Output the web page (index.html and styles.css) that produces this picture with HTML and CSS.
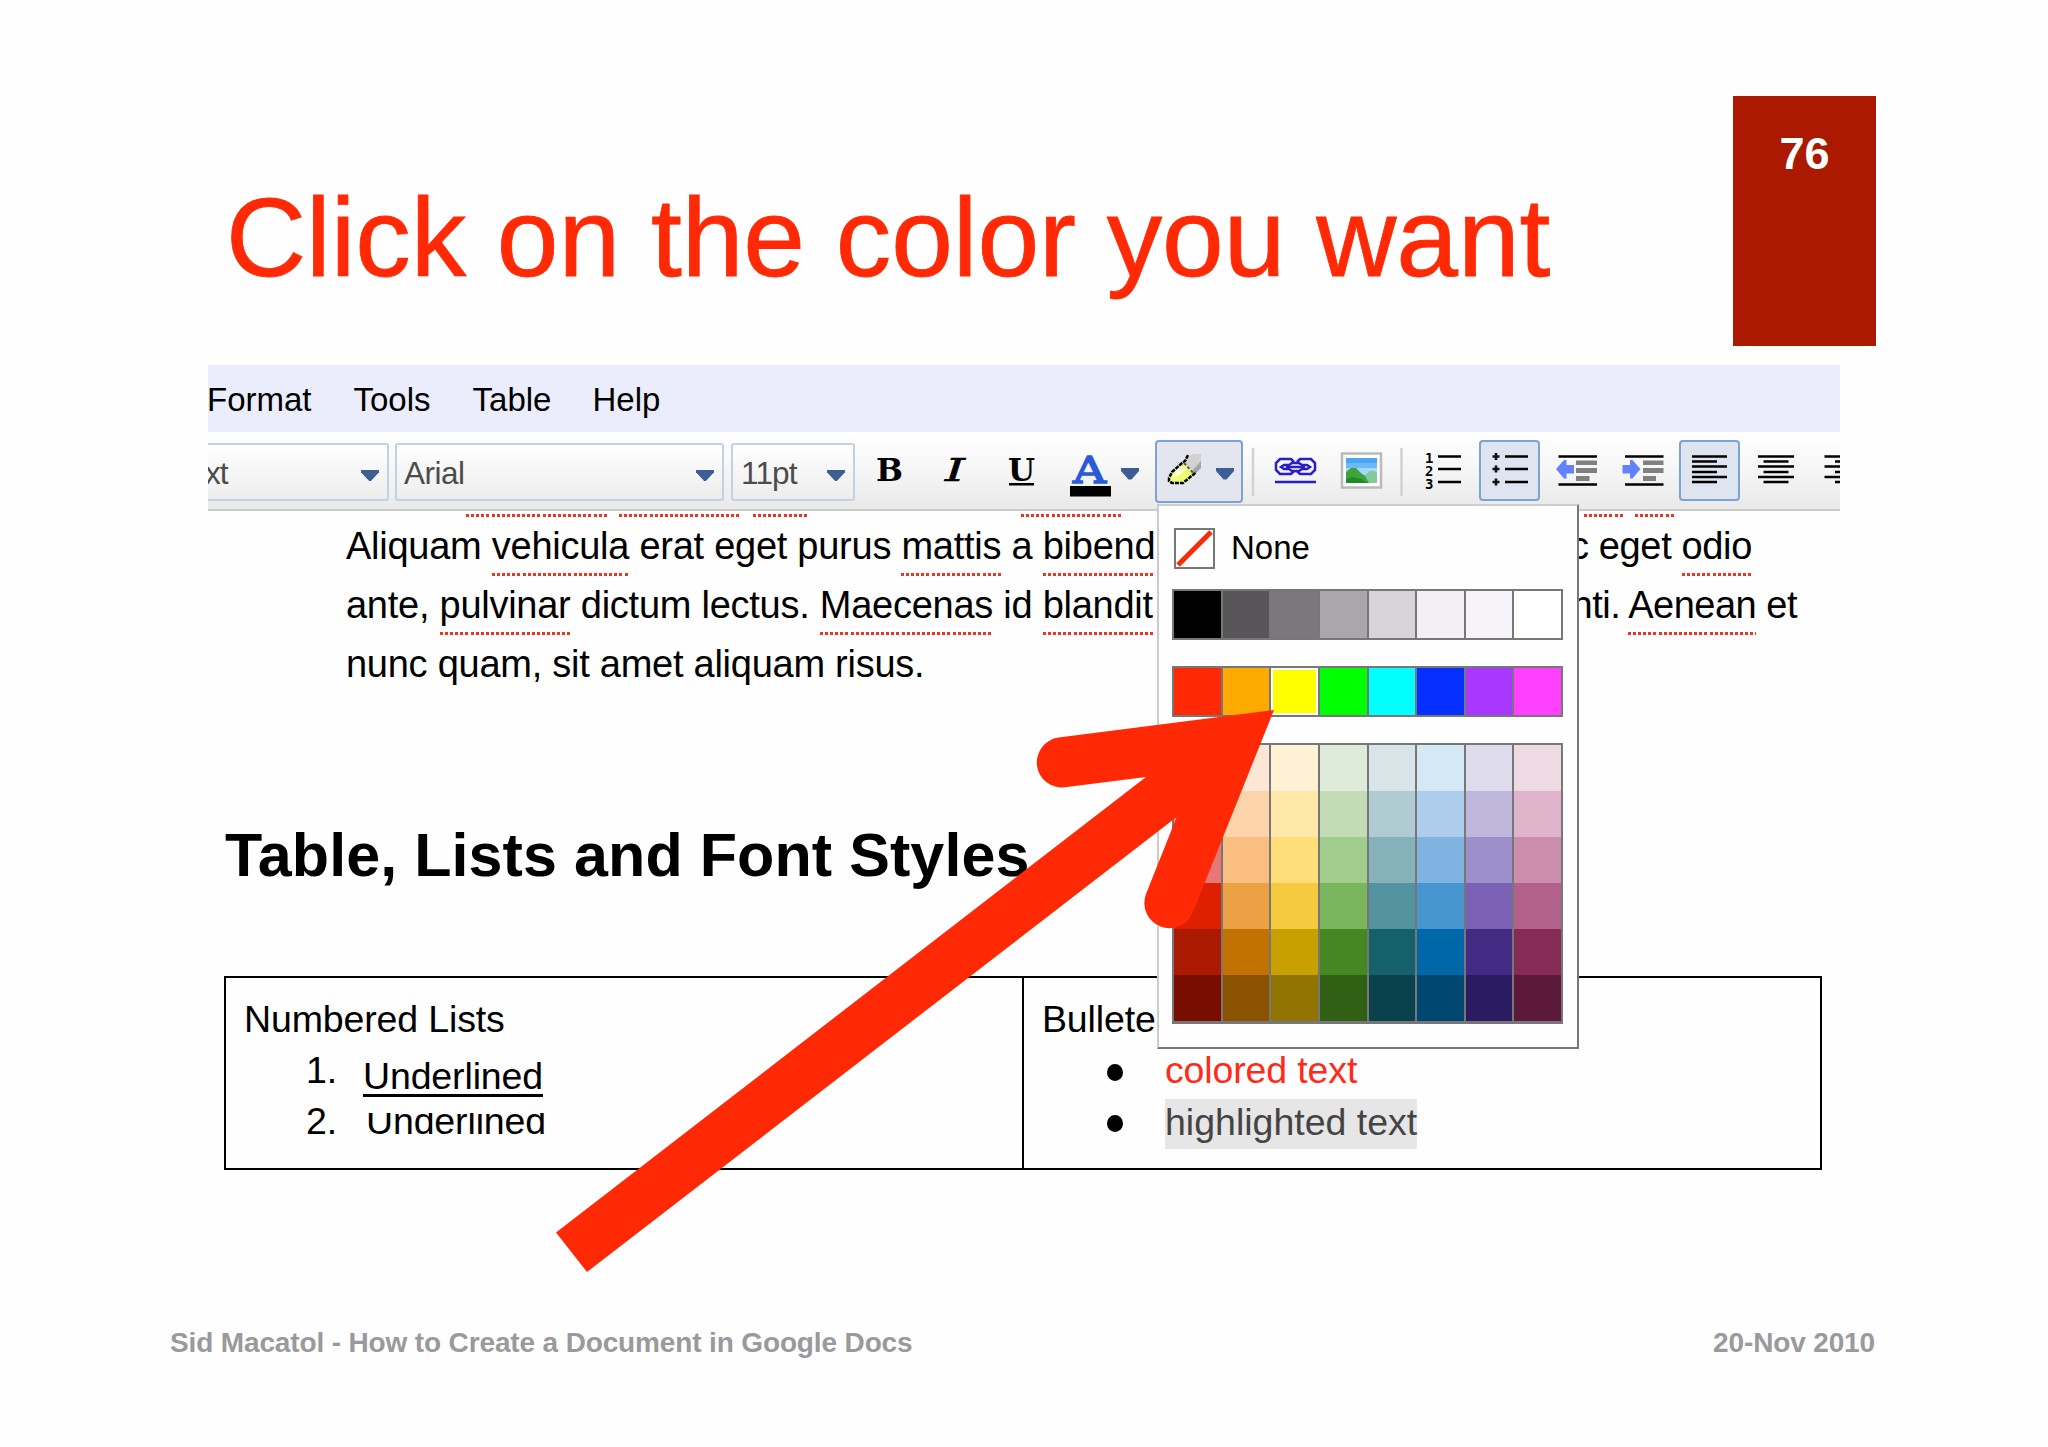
FILE: index.html
```html
<!doctype html>
<html lang="en">
<head>
<meta charset="utf-8">
<title>Click on the color you want</title>
<link rel="stylesheet" href="styles.css">
</head>
<body>
<div class="slide">

<header class="header">
  <h1 class="title">Click on the color you want</h1>
  <div class="page-number">76</div>
</header>

<div class="shot">
  <nav class="menubar">
    <span>Format</span><span>Tools</span><span>Table</span><span>Help</span>
  </nav>

  <!-- Icon viewBoxes share one coordinate space, so neighbours line up -->
  <div class="toolbar">
    <div class="select select-style"><span>xt</span><i class="caret"></i></div>
    <div class="select select-font"><span>Arial</span><i class="caret"></i></div>
    <div class="select select-size"><span>11pt</span><i class="caret"></i></div>
    <svg class="icon" width="293" height="78" viewBox="856 432 293 78">
      <text class="glyph bold" x="876" y="481" textLength="27" lengthAdjust="spacingAndGlyphs">B</text>
      <text class="glyph italic" x="945" y="481" textLength="20" lengthAdjust="spacingAndGlyphs">I</text>
      <text class="glyph bold" x="1008" y="481" textLength="27" lengthAdjust="spacingAndGlyphs">U</text>
      <rect x="1009" y="483" width="25" height="2.5"/>
      <text class="glyph letter-a" x="1073" y="483" textLength="33" lengthAdjust="spacingAndGlyphs">A</text>
      <rect x="1070" y="486" width="41" height="10.5"/>
      <path class="arrow-down" d="M1121 468h18v3l-7.500 8.500h-3l-7.500-8.500z"/>
    </svg>
    <div class="button button-highlight">
      <svg class="icon" width="84" height="60" viewBox="1157 442 84 60">
        <path fill="#d2d2d2" d="M1185 463l3-6 5-3h8v11l-6 10z"/>
        <path fill="#a4a4a4" d="M1201 461v7l-6 6-3-3z"/>
        <path fill="#eeff70" d="M1168 481l2-7 14-11 11 12-11 8h-15z"/>
        <path fill="#fff" d="M1173 474l9-8 4 4-12 8z" opacity=".75"/>
        <path d="M1188 455l-3 6-3 2-10 9-3 6v3l3 2h11l11-9 2-2" fill="none" stroke="#000" stroke-width="2.5" stroke-dasharray="4 1"/>
        <path d="M1184 463l10 11" fill="none" stroke="#555" stroke-width="2" stroke-dasharray="3 2"/>
        <path class="arrow-down" d="M1216 468h18v3l-7.500 8.500h-3l-7.500-8.500z"/>
      </svg>
    </div>
    <svg class="icon" width="236" height="78" viewBox="1243 432 236 78">
      <path class="separator" d="M1253 448v48M1401.500 448v48"/>
      <g class="link">
        <path d="M1294 462l-3-3h-11l-4 4v7l4 4h11l3-3"/>
        <path d="M1297 462l3-3h11l4 4v7l-4 4h-11l-3-3"/>
        <path d="M1281 467l3-2h5l3-2h7l3 2h5l3 2-3 2h-5l-3 2h-7l-3-2h-5z"/>
        <path d="M1286 467h19M1275 482h41"/>
      </g>
      <rect x="1342" y="453.500" width="39" height="34" fill="#fff" stroke="#bdb9b7" stroke-width="2.5"/>
      <path fill="#4aa6f2" d="M1346 458h31v25h-31z"/>
      <path fill="#6db8f6" d="M1346 463h31v5h-31z"/>
      <path fill="#a5d6fb" d="M1346 468h31v7h-31z"/>
      <path fill="#7fc99b" d="M1363 476l4-2 2-3h5l3 2v10h-14z"/>
      <path fill="#3da33c" d="M1346 472l5-4h5l5 5 4 3 4 7h-23z"/>
      <path fill="#218a28" d="M1346 479l6-2 9 2 7 4h-22z"/>
      <text class="digit" x="1425" y="463">1</text>
      <text class="digit" x="1425" y="476">2</text>
      <text class="digit" x="1425" y="489">3</text>
      <path class="lines" d="M1438 456.500h23M1438 469h23M1438 482h23"/>
    </svg>
    <div class="button button-toggle">
      <svg class="icon" width="57" height="57" viewBox="1481 442 57 57">
        <path class="plus" d="M1492.500 456.500h7M1496 453v7M1492.500 469h7M1496 465.500v7M1492.500 482h7M1496 478.500v7"/>
        <path class="lines" d="M1505 456.500h23M1505 469h23M1505 482h23"/>
      </svg>
    </div>
    <svg class="icon" width="139" height="78" viewBox="1540 432 139 78">
      <path class="lines" d="M1558.500 456.500h38.500M1558.500 484.500h38.500M1625 456.500h38.500M1625 484.500h38.500"/>
      <path fill="#808080" d="M1576 460.500h21v4.500h-21zM1576 468h21v5h-21zM1576 476h13.500v5h-13.500zM1643 460.500h20.500v4.500h-20.500zM1643 468h20.500v5h-20.500zM1643 476h13v5h-13z"/>
      <path fill="#6482ff" d="M1556 469l8-9h2.500v5h7.500v8.500h-7.500v5h-2.500zM1640.500 469l-8-9h-2.500v5h-7.500v8.500h7.500v5h2.500z"/>
    </svg>
    <div class="button button-toggle">
      <svg class="icon" width="57" height="57" viewBox="1681 442 57 57">
        <path class="lines" d="M1692 456.500h35M1692 461.500h25M1692 466.500h35M1692 472h25M1692 477h35M1692 482h25"/>
      </svg>
    </div>
    <svg class="icon" width="100" height="78" viewBox="1740 432 100 78">
      <path class="lines" d="M1758 456.500h36M1763.500 461.500h25M1758 466.500h36M1763.500 472h25M1758 477h36M1763.500 482h25"/>
      <path class="lines" d="M1824.500 456.500h20M1835 461.500h10M1824.500 466.500h20M1835 472h10M1824.500 477h20M1835 482h10"/>
    </svg>
  </div>

  <div class="document">
    <div class="cut-line">
      <i style="width:142px;margin-left:258px"></i>
      <i style="width:122px;margin-left:11px"></i>
      <i style="width:54px;margin-left:12px"></i>
      <i style="width:101px;margin-left:214px"></i>
      <i style="width:39px;margin-left:462px"></i>
      <i style="width:39px;margin-left:12px"></i>
    </div>
    <div class="text-line">
      <span>Aliquam <u>vehicula</u> erat eget purus <u>mattis</u> a <u>bibend</u></span>
      <span class="short">c eget <u>odio</u></span>
    </div>
    <div class="text-line">
      <span>ante, <u>pulvinar</u> dictum lectus. <u>Maecenas</u> id <u>blandit</u></span>
      <span class="tight">nti. <u>Aenean</u> et</span>
    </div>
    <div class="text-line"><span>nunc quam, sit amet aliquam risus.</span></div>

    <h2 class="heading">Table, Lists and Font Styles</h2>

    <div class="table">
      <div class="cell">
        <div>Numbered Lists</div>
        <div class="item"><span class="marker">1.</span><span class="underlined">Underlined</span></div>
        <div class="item"><span class="marker">2.</span><span class="cut">Underlined</span></div>
      </div>
      <div class="cell">
        <div>Bullete</div>
        <div class="item"><i class="bullet"></i><span class="colored">colored text</span></div>
        <div class="item"><i class="bullet"></i><span class="highlighted">highlighted text</span></div>
      </div>
    </div>
  </div>

  <div class="picker">
    <div class="none">
      <svg width="41" height="41" viewBox="0 0 41 41">
        <rect x="1" y="1" width="39" height="39" fill="#fff" stroke="#777" stroke-width="2"/>
        <path d="M4 37L37 4" stroke="#ff2a05" stroke-width="5"/>
      </svg>
      <span>None</span>
    </div>
    <div class="swatches" id="grays"></div>
    <div class="swatches" id="brights"></div>
    <div class="swatches" id="shades"></div>
  </div>
</div>

<footer class="footer">
  <span>Sid Macatol - How to Create a Document in Google Docs</span>
  <span>20-Nov 2010</span>
</footer>

<svg class="pointer" width="2048" height="1447" viewBox="0 0 2048 1447">
  <path fill="#ff2a05" d="M1274 710L1058.600 737.600A25 25 0 0 0 1065 787.300L1146 777L556 1232.500L587 1272L1176.700 817L1146 894A25 25 0 0 0 1193 912Z"/>
</svg>

</div>

<script>
var palettes = {
  grays: ['#000000 #575558 #7a787a #a9a7a9 #d6d4d7 #f2f0f4 #f6f4f8 #ffffff'],
  brights: ['#ff2a05 #ffaa00 #ffff00 #00ff00 #00ffff #0530ff #a838ff #ff40ff'],
  shades: [
    '#f4cccc #fce6d6 #fff1d4 #dfebda #d8e4e7 #d5e8f5 #dedbec #eddae2',
    '#ea9999 #fcd3ab #ffe8aa #c3dcb5 #b0cbd2 #aecdec #bfb6dc #dfb4ca',
    '#e87878 #fabf80 #ffdd79 #a1ce8c #86b1ba #80b3e2 #9c8fca #cd8eae',
    '#dc2000 #eda145 #f4cb3e #7bb55e #52939f #4796d0 #7b61b3 #b2628a',
    '#ab1900 #c27200 #c8a000 #448723 #14616b #0067a8 #432b83 #862b56',
    '#780d00 #8b5200 #907300 #2f6014 #09424c #004872 #2b1b60 #5c193a'
  ]
};

Object.keys(palettes).forEach((id) => {
  var box = document.getElementById(id);
  palettes[id].join(' ').split(' ').forEach((color) => {
    var cell = document.createElement('i');
    cell.style.background = color;
    if (color === '#ffff00') {
      cell.className = 'selected';
    }
    box.appendChild(cell);
  });
});
</script>
</body>
</html>
```
FILE: styles.css
```css
* { box-sizing: border-box; }
body { margin: 0; background: #fefefe; font-family: "Liberation Sans", Arial, sans-serif; }
i { display: block; }

.slide { position: relative; width: 2048px; height: 1447px; overflow: hidden; }

.header { display: flex; justify-content: space-between; height: 365px; padding: 96px 172px 0 226px; }
.title { margin: 82px 0 0; font-size: 111px; line-height: 120px; font-weight: normal; letter-spacing: -0.080px; color: #ff2a05; white-space: nowrap; -webkit-text-stroke: 0.800px #ff2a05; }
.page-number { width: 143px; height: 250px; padding-top: 28px; background: #ab1900; color: #fff; font-size: 45px; line-height: 60px; font-weight: bold; text-align: center; }

.shot { position: relative; width: 1632px; margin-left: 208px; }

.menubar { display: flex; gap: 42px; height: 67px; padding-top: 10px; background: #ebedfd; font-size: 33px; line-height: 50px; overflow: hidden; }
.menubar span:first-child { margin-left: -1px; }
.menubar span:last-child { margin-left: -1px; }

.toolbar { display: flex; height: 79px; overflow: hidden; background: linear-gradient(#fff, #f7f7f7 45%, #e9e9e9); border-bottom: 2px solid #ccc; }
.icon { display: block; flex: none; }

.select { display: flex; flex: none; justify-content: space-between; height: 58px; margin-top: 11px; padding: 0 8px; border: 2px solid #c3d2e2; border-radius: 3px; background: linear-gradient(#fff, #ededed); color: #4c4c4c; font-size: 31.500px; line-height: 56px; }
.select-style { width: 181px; margin-right: 6px; padding-left: 0; border-left: 0; border-radius: 0 3px 3px 0; letter-spacing: -1px; }
.select-style span { margin-left: -3px; }
.select-font { width: 329px; margin-right: 7px; padding-left: 7px; letter-spacing: -0.500px; }
.select-size { width: 124px; margin-right: 1px; letter-spacing: -0.800px; }
.caret { width: 18px; height: 11px; margin-top: 25px; background: #3c5e92; clip-path: polygon(0 0, 100% 0, 100% 20%, 55% 100%, 45% 100%, 0 20%); }

.button { flex: none; height: 63px; margin-top: 8px; border: 2px solid #7ba4d2; border-radius: 4px; background: #e3e6ef; overflow: hidden; }
.button-highlight { width: 88px; margin-left: 6px; }
.button-toggle { width: 61px; height: 61px; background: #dfe5f0; }

.glyph { font-family: "DejaVu Serif", serif; font-size: 32px; }
.bold { font-weight: bold; }
.italic { font-style: italic; stroke: #000; stroke-width: 0.600px; }
.letter-a { fill: #2a5bd7; font-size: 38px; stroke: #2a5bd7; stroke-width: 1.500px; }
.digit { font-family: "DejaVu Sans Mono", monospace; font-weight: bold; font-size: 14px; }
.arrow-down { fill: #3c5e92; }
.separator { stroke: #d2d2d4; stroke-width: 2.500px; }
.lines { stroke: #000; stroke-width: 2.600px; }
.plus { stroke: #111; stroke-width: 2.600px; }
.link { fill: none; stroke: #2a1fc4; stroke-width: 2.500px; }

.document { height: 670px; padding-top: 1px; }
.cut-line { display: flex; height: 3px; margin-top: 2px; }
.cut-line i, .text-line u { background: repeating-linear-gradient(90deg, #ee3320 0 3px, transparent 3px 5.100px) left bottom / 100% 3px no-repeat; }
.text-line { display: flex; justify-content: space-between; height: 59px; padding: 0 43px 0 138px; font-size: 38px; line-height: 59px; letter-spacing: -0.260px; white-space: nowrap; }
.text-line u { padding-bottom: 9px; text-decoration: none; }
.short { margin-right: 45px; letter-spacing: -0.350px; }
.tight { letter-spacing: -0.500px; }

.heading { margin: 126px 0 0 17px; font-size: 61px; line-height: 70px; letter-spacing: 0.080px; white-space: nowrap; }
.table { display: flex; width: 1598px; height: 194px; margin: 86px 0 0 16px; border: 2px solid #000; }
.cell { flex: none; width: 796px; padding: 16px 0 0 18px; font-size: 37.500px; line-height: 50px; letter-spacing: -0.140px; white-space: nowrap; }
.cell + .cell { width: 798px; border-left: 2px solid #000; }
.cell .item:nth-child(2) { margin-top: 1px; }
.item { display: flex; height: 51px; }
.marker { width: 119px; padding-left: 62px; }
.underlined { margin-top: 6px; text-decoration: underline 2.500px; text-underline-offset: 5px; text-decoration-skip-ink: none; }
.cut { margin-left: 3px; clip-path: inset(17px 0 0 0); }
.bullet { width: 16px; height: 17px; margin: 19px 42px 0 65px; border-radius: 50%; background: #000; }
.colored { color: #ff2a1a; }
.highlighted { height: 50px; margin-top: 3px; line-height: 46px; letter-spacing: 0; background: #e6e6e6; color: #444; }

/* Color menu, hanging off the highlight button */
.picker { position: absolute; left: 949px; top: 139px; width: 422px; height: 545px; padding: 22px 0 0 13px; background: #fefefe; border: 2px solid #777; border-top-color: #ccc; border-left-color: #ccc; }
.none { display: flex; gap: 16px; height: 61px; padding-left: 2px; font-size: 33px; line-height: 39px; }
.swatches { display: grid; grid-template-columns: repeat(8, 1fr); column-gap: 2px; width: 391px; margin-bottom: 26px; border: 2px solid #777; background: #777; }
.swatches i { height: 47px; }
#shades { border-bottom-width: 3px; }
#shades i { height: 46px; }
.swatches .selected { border: 2.500px solid #fff; }

.footer { display: flex; justify-content: space-between; margin-top: 144px; padding: 0 173px 0 170px; color: #9a999b; font-size: 28px; font-weight: bold; line-height: 36px; letter-spacing: -0.140px; }

.pointer { position: absolute; left: 0; top: 0; }
```
